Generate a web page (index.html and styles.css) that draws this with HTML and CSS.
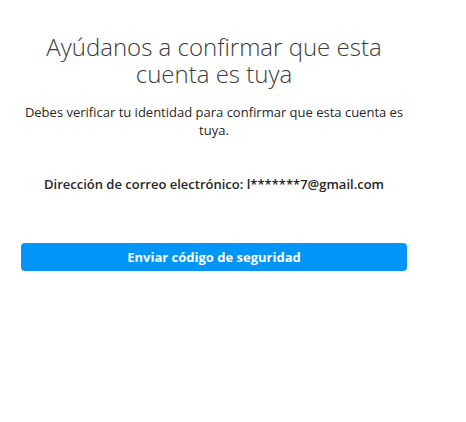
FILE: index.html
```html
<!DOCTYPE html>
<html lang="es">
<head>
    <meta charset="UTF-8">
    <meta name="viewport" content="width=device-width, initial-scale=1.0">
    <title>Confirmar cuenta</title>
    <link rel="stylesheet" href="styles.css">
</head>
<body>
    <div class="panel">
        <h1 class="title">Ayúdanos a confirmar que esta cuenta es tuya</h1>
        <p class="lead">Debes verificar tu identidad para confirmar que esta cuenta es tuya.</p>
        <p class="email">Dirección de correo electrónico: l*******7@gmail.com</p>
        <button class="button">Enviar código de seguridad</button>
    </div>
</body>
</html>
```

FILE: styles.css
```css
body {
    margin: 0;
    background: #fff;
    font-family: "Open Sans", Arial, sans-serif;
    color: #262626;
}
.panel {
    width: 386px;
    margin-left: 21px;
    padding-top: 33px;
    display: flex;
    flex-direction: column;
    text-align: center;
}
.title {
    margin: 0 20px;
    font-size: 24px;
    font-weight: 300;
    line-height: 27px;
    color: #3c3c3c;
}
.lead {
    margin: 16px 0 0;
    font-size: 13px;
    line-height: 18px;
}
.email {
    margin: 36px 0 0;
    font-size: 13px;
    font-weight: 600;
    line-height: 18px;
}
.button {
    margin-top: 50px;
    height: 28px;
    background: #0095f6;
    color: white;
    border: none;
    border-radius: 4px;
    font-family: inherit;
    font-size: 13px;
    font-weight: 700;
    cursor: pointer;
}
```
